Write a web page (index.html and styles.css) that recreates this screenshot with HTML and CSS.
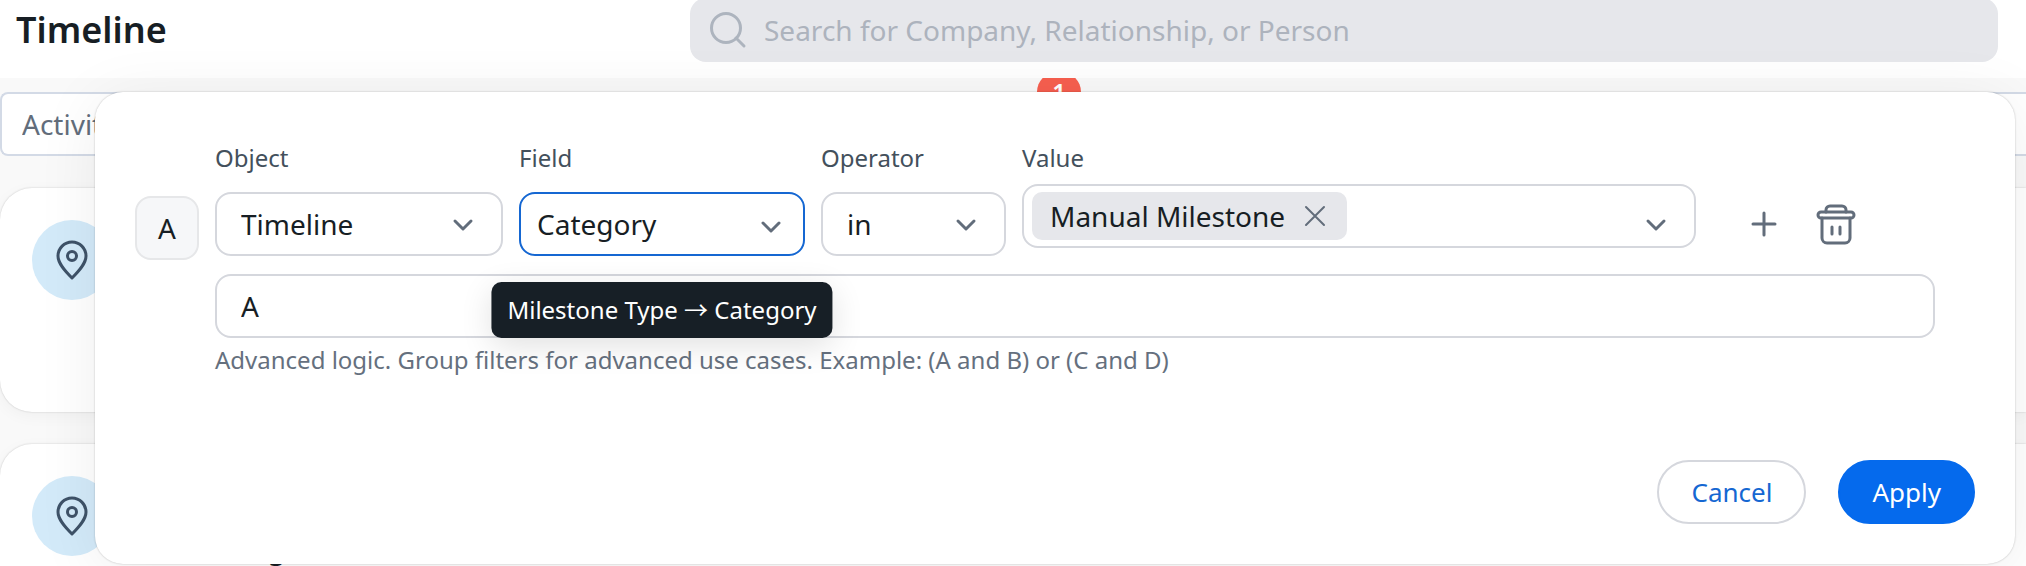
FILE: index.html
```html
<!DOCTYPE html>
<html lang="en">
<head>
    <meta charset="UTF-8">
    <meta name="viewport" content="width=device-width, initial-scale=1.0">
    <title>Timeline</title>
    <link rel="stylesheet" href="styles.css">
</head>
<body>
    <header class="header">
        <h1 class="title">Timeline</h1>
        <label class="search">
            <svg class="search-icon" width="36" height="36" viewBox="0 0 36 36"><circle cx="16" cy="16" r="14.5"/><path d="M26 26l8 8"/></svg>
            <input type="search" aria-label="Search" placeholder="Search for Company, Relationship, or Person">
        </label>
    </header>

    <main class="content">
        <div class="toolbar">
            <input class="activity" type="text" aria-label="Activity" placeholder="Activity">
            <span class="count">1</span>
        </div>
        <article class="card">
            <span class="card-icon">
                <svg width="32" height="40" viewBox="0 0 32 40"><path d="M16 38C9 31 2 23.500 2 16a14 14 0 0 1 28 0c0 7.500-7 15-14 22z"/><circle cx="16" cy="16" r="4.500"/></svg>
            </span>
        </article>
        <article class="card">
            <span class="card-icon">
                <svg width="32" height="40" viewBox="0 0 32 40"><path d="M16 38C9 31 2 23.500 2 16a14 14 0 0 1 28 0c0 7.500-7 15-14 22z"/><circle cx="16" cy="16" r="4.500"/></svg>
            </span>
            <p class="card-text">g</p>
        </article>
    </main>

    <form class="modal" role="dialog" aria-label="Filters">
        <div class="filter">
            <span class="letter">A</span>

            <div class="field">
                <label for="object">Object</label>
                <div class="select">
                    <select id="object"><option>Timeline</option></select>
                    <svg class="chevron" width="24" height="24" viewBox="0 0 24 24"><path d="M4 8l8 8 8-8"/></svg>
                </div>
            </div>

            <div class="field">
                <label for="field">Field</label>
                <div class="select active">
                    <select id="field" aria-describedby="field-tip"><option>Category</option></select>
                    <svg class="chevron" width="24" height="24" viewBox="0 0 24 24"><path d="M4 8l8 8 8-8"/></svg>
                    <div class="tooltip" id="field-tip" role="tooltip">Milestone Type <span class="arrow">→</span> Category</div>
                </div>
            </div>

            <div class="field">
                <label for="operator">Operator</label>
                <div class="select">
                    <select id="operator"><option>in</option></select>
                    <svg class="chevron" width="24" height="24" viewBox="0 0 24 24"><path d="M4 8l8 8 8-8"/></svg>
                </div>
            </div>

            <div class="field value">
                <label for="value">Value</label>
                <div class="multi">
                    <span class="chip">Manual Milestone
                        <button type="button" aria-label="Remove">
                            <svg width="24" height="24" viewBox="0 0 24 24"><path d="M3 3l18 18M21 3L3 21"/></svg>
                        </button>
                    </span>
                    <input id="value" type="text">
                    <svg class="chevron" width="24" height="24" viewBox="0 0 24 24"><path d="M4 8l8 8 8-8"/></svg>
                </div>
            </div>

            <div class="actions">
                <button type="button" aria-label="Add filter">
                    <svg width="28" height="28" viewBox="0 0 28 28"><path d="M14 3v22M3 14h22"/></svg>
                </button>
                <button type="button" aria-label="Delete filter">
                    <svg width="40" height="40" viewBox="0 0 40 40"><path d="M10 8V6a4 4 0 0 1 4-4h12a4 4 0 0 1 4 4v2"/><rect x="2" y="8" width="36" height="6" rx="3"/><path d="M6 14v20a5 5 0 0 0 5 5h18a5 5 0 0 0 5-5V14M16 23v7M24 23v7"/></svg>
                </button>
            </div>
        </div>

        <div class="logic">
            <input type="text" value="A" aria-label="Advanced logic" aria-describedby="logic-help">
            <p id="logic-help">Advanced logic. Group filters for advanced use cases. Example: (A and B) or (C and D)</p>
        </div>

        <div class="footer">
            <button type="button" class="btn">Cancel</button>
            <button type="submit" class="btn primary">Apply</button>
        </div>
    </form>
</body>
</html>
```

FILE: styles.css
```css
* {
    box-sizing: border-box;
}
body {
    margin: 0;
    height: 100vh;
    overflow: hidden;
    position: relative;
    background: #f9f9f9;
    color: #171e24;
    font-family: "Noto Sans", sans-serif;
    font-size: 28px;
}
input, select, button {
    font: inherit;
    color: inherit;
    margin: 0;
}
button {
    border: none;
    background: none;
    padding: 0;
    cursor: pointer;
}
svg {
    display: block;
    flex: none;
    fill: none;
    stroke: #626d7b;
    stroke-width: 3;
    stroke-linecap: round;
    stroke-linejoin: round;
    overflow: visible;
}

/* header */
.header {
    position: relative;
    z-index: 1;
    display: grid;
    grid-template-columns: 674fr 1308fr;
    align-items: end;
    align-content: end;
    height: 78px;
    padding: 0 28px 16px 16px;
    background: #fff;
}
.title {
    margin: 0 0 8px;
    font-size: 36px;
    font-weight: 600;
    line-height: 48px;
}
.search {
    display: flex;
    align-items: center;
    gap: 18px;
    height: 64px;
    padding: 0 20px;
    border-radius: 16px;
    background: #e6e7eb;
}
.search-icon {
    stroke: #adb4be;
}
.search input {
    flex: 1;
    padding: 0;
    border: none;
    outline: none;
    background: none;
}
.search input::placeholder {
    color: #adb3bd;
    opacity: 1;
}

/* page behind the dialog */
.content {
    height: calc(100vh - 78px);
    overflow: hidden;
    padding-top: 14px;
}
.toolbar {
    position: relative;
    margin-bottom: 32px;
}
.activity {
    display: block;
    width: 100%;
    height: 64px;
    padding: 0 20px;
    border: 2px solid #d3dae6;
    border-right: none;
    border-radius: 8px 0 0 8px;
    background: #fff;
}
.activity::placeholder {
    color: #626d7b;
    opacity: 1;
}
.count {
    position: absolute;
    top: -20px;
    left: 1037px;
    width: 44px;
    border-radius: 22px;
    background: #f75f4f;
    color: #fff;
    font-size: 24px;
    font-weight: 600;
    line-height: 40px;
    text-align: center;
}
.card {
    display: flex;
    gap: 156px;
    height: 224px;
    margin-bottom: 32px;
    padding: 32px;
    border-radius: 32px 0 0 32px;
    background: #fff;
    box-shadow: 0 0 2px rgba(0, 0, 0, 0.2), 0 4px 16px rgba(0, 0, 0, 0.04);
}
.card-icon {
    display: flex;
    align-items: center;
    justify-content: center;
    width: 80px;
    height: 80px;
    border-radius: 50%;
    background: #d3eaf9;
}
.card-icon svg {
    stroke: #3e5268;
}
.card-text {
    margin: 54px 0 0;
    font-weight: 600;
    line-height: 36px;
}

/* dialog */
.modal {
    position: absolute;
    z-index: 2;
    top: 92px;
    left: 95px;
    right: 11px;
    padding: 48px 40px 40px;
    border-radius: 28px;
    background: #fff;
    box-shadow: 0 0 2px rgba(0, 0, 0, 0.25), 0 8px 64px rgba(0, 0, 0, 0.07);
}
.filter {
    display: grid;
    grid-template-columns: 64px 288fr 286fr 185fr 674fr 263px;
    gap: 16px;
    align-items: start;
}
.letter {
    height: 64px;
    margin-top: 56px;
    border: 2px solid #e6e7e9;
    border-radius: 16px;
    background: #f6f7f9;
    line-height: 60px;
    text-align: center;
}
.field {
    display: flex;
    flex-direction: column;
    gap: 16px;
    min-width: 0;
}
.field.value {
    gap: 8px;
}
.field label {
    color: #43505c;
    font-size: 24px;
    line-height: 36px;
}
.select {
    position: relative;
    display: grid;
    align-items: center;
}
.select select,
.select .chevron {
    grid-area: 1 / 1;
}
.select select,
.multi,
.logic input {
    width: 100%;
    height: 64px;
    border: 2px solid #d5d7dd;
    border-radius: 16px;
    background: #fff;
    outline: none;
}
.select select {
    appearance: none;
    padding: 0 24px;
}
.chevron {
    justify-self: end;
    margin: 2px 28px 0 0;
    pointer-events: none;
}
.select.active select {
    border-color: #1567d2;
    padding-left: 16px;
}
.select.active .chevron {
    margin: 6px 22px 0 0;
}
.tooltip {
    position: absolute;
    top: calc(100% + 26px);
    left: 50%;
    transform: translateX(-50%);
    padding: 0 16px;
    border-radius: 10px;
    background: #171f26;
    box-shadow: 0 8px 32px rgba(0, 0, 0, 0.12);
    color: #fff;
    font-size: 24px;
    line-height: 56px;
    white-space: nowrap;
}
.arrow {
    font-family: "Noto Sans CJK SC", sans-serif;
    line-height: 1;
}
.multi {
    display: flex;
    align-items: center;
    padding-left: 8px;
}
.multi input {
    flex: 1;
    min-width: 0;
    border: none;
    outline: none;
    background: none;
}
.multi .chevron {
    margin: 18px 26px 0 0;
}
.chip {
    display: flex;
    align-items: center;
    gap: 18px;
    height: 48px;
    padding: 0 20px 0 18px;
    border-radius: 10px;
    background: #e6e7eb;
    white-space: nowrap;
}
.chip svg {
    stroke-width: 2;
}
.actions {
    display: flex;
    gap: 8px;
    margin-top: 52px;
    padding-left: 20px;
}
.actions button {
    display: flex;
    align-items: center;
    justify-content: center;
    width: 64px;
    height: 64px;
}
.logic {
    margin: 14px 40px 0 80px;
}
.logic input {
    display: block;
    padding: 0 24px;
}
.logic p {
    margin: 4px 0 0;
    color: #65707e;
    font-size: 24px;
    line-height: 36px;
}
.footer {
    display: flex;
    justify-content: flex-end;
    gap: 32px;
    margin-top: 82px;
}
.btn {
    height: 64px;
    padding: 0 32px;
    border: 2px solid #d5d7dd;
    border-radius: 32px;
    color: #1567d2;
    font-size: 26px;
}
.btn.primary {
    border-color: #056aed;
    background: #056aed;
    color: #fff;
}
```
